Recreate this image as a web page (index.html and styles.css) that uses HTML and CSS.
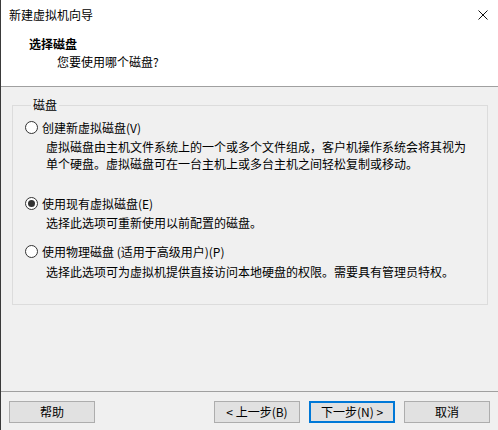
FILE: index.html
```html
<!DOCTYPE html>
<html lang="zh-CN">
<head>
<meta charset="utf-8">
<title>新建虚拟机向导</title>
<link rel="stylesheet" href="styles.css">
</head>
<body>
<div class="window">
  <div class="titlebar">
    <span class="title">新建虚拟机向导</span>
    <svg class="close" width="10" height="10" viewBox="0 0 10 10"><path d="M0.5 0.5 L9.5 9.5 M9.5 0.5 L0.5 9.5" stroke="#111" stroke-width="1" fill="none"/></svg>
  </div>
  <div class="header">
    <div class="h-title">选择磁盘</div>
    <div class="h-sub">您要使用哪个磁盘?</div>
  </div>
  <div class="content">
    <fieldset class="group">
      <legend>磁盘</legend>
      <div class="option"><span class="radio"></span><span>创建新虚拟磁盘(V)</span></div>
      <p class="desc d1">虚拟磁盘由主机文件系统上的一个或多个文件组成，客户机操作系统会将其视为<br>单个硬盘。虚拟磁盘可在一台主机上或多台主机之间轻松复制或移动。</p>
      <div class="option o2"><span class="radio checked"></span><span>使用现有虚拟磁盘(E)</span></div>
      <p class="desc">选择此选项可重新使用以前配置的磁盘。</p>
      <div class="option o3"><span class="radio"></span><span>使用物理磁盘 (适用于高级用户)(P)</span></div>
      <p class="desc d3">选择此选项可为虚拟机提供直接访问本地硬盘的权限。需要具有管理员特权。</p>
    </fieldset>
  </div>
  <div class="footer">
    <button class="btn">帮助</button>
    <div class="spacer"></div>
    <button class="btn">&lt; 上一步(B)</button>
    <button class="btn primary">下一步(N) &gt;</button>
    <button class="btn">取消</button>
  </div>
</div>
</body>
</html>
```

FILE: styles.css
```css
html, body {
  margin: 0;
  padding: 0;
}
body {
  width: 498px;
  height: 430px;
  overflow: hidden;
  background: #f0f0f0;
  font-family: "Noto Sans CJK SC", "Noto Sans", sans-serif;
  font-size: 12px;
  color: #000;
}
.window {
  box-sizing: border-box;
  width: 498px;
  height: 430px;
  border-left: 1px solid #3a3a3a;
  display: flex;
  flex-direction: column;
}
.titlebar {
  height: 30px;
  background: #fff;
  display: flex;
  align-items: center;
  justify-content: space-between;
  padding: 0 10px 1px 8px;
  box-sizing: border-box;
}
.title {
  line-height: 16px;
}
.close {
  display: block;
}
.header {
  background: #fff;
  height: 51px;
  border-bottom: 1px solid #a0a0a0;
  padding: 5px 0 0 28px;
  box-sizing: content-box;
}
.h-title {
  font-weight: bold;
  line-height: 18px;
}
.h-sub {
  line-height: 18px;
  padding-left: 28px;
}
.content {
  flex: 1;
  padding: 10px 10px 0 11px;
}
.group {
  margin: 0;
  border: 1px solid #dcdcdc;
  padding: 6px 12px 24px 12px;
  min-width: 0;
}
.group legend {
  margin-left: 6px;
  padding: 0 2px;
  line-height: 16px;
}
.option {
  display: flex;
  align-items: center;
  gap: 4px;
  line-height: 17px;
  height: 17px;
}
.radio {
  box-sizing: border-box;
  width: 13px;
  height: 13px;
  border: 1px solid #333;
  border-radius: 50%;
  background: #fff;
  display: flex;
  align-items: center;
  justify-content: center;
}
.radio.checked::after {
  content: "";
  width: 7px;
  height: 7px;
  border-radius: 50%;
  background: #333;
}
.desc {
  margin: 2px 0 0 21px;
  line-height: 17px;
}
.d3 {
  margin-top: 3px;
}
.o2 {
  margin-top: 23px;
}
.o3 {
  margin-top: 12px;
}
.footer {
  border-top: 1px solid #a0a0a0;
  padding: 9px 8px 7px 8px;
  display: flex;
  gap: 9px;
}
.spacer {
  flex: 1;
}
.btn {
  box-sizing: border-box;
  width: 86px;
  height: 22px;
  margin: 0;
  padding: 0;
  border: 1px solid #adadad;
  background: #e1e1e1;
  font-family: inherit;
  font-size: 12px;
  color: #000;
  line-height: 18px;
}
.btn.primary {
  border: 2px solid #0078d7;
}
```
